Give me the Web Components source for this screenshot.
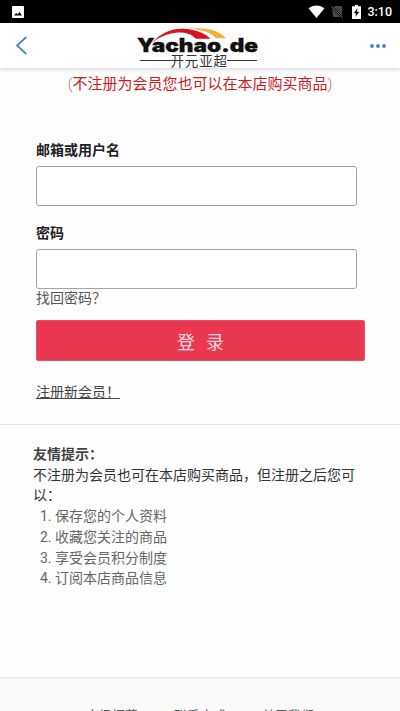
<!DOCTYPE html>
<html lang="zh-CN">
<head>
<meta charset="utf-8">
<meta name="viewport" content="width=device-width, initial-scale=1">
<title>Yachao.de</title>
<style>
    body {
        margin: 0;
        height: 711px;
        overflow: hidden;
        background: #fefefe;
        color: #555;
        font-family: Roboto, "Noto Sans CJK SC", sans-serif;
        font-size: 14px;
    }
</style>
</head>
<body>
<login-page></login-page>

<script>
/**
 * android status bar
 */
class statusBar extends HTMLElement {
    constructor() {
        super();
        this.attachShadow({mode: 'open'});
    }

    connectedCallback() {
        const time = this.getAttribute('time') || '0:00';
        this.shadowRoot.innerHTML = `
            <style>
                :host {
                    display: flex;
                    align-items: center;
                    height: 23px;
                    padding: 0 8px 0 12px;
                    box-sizing: border-box;
                    background: #000;
                    color: #fff;
                }
                svg { display: block; }
                .photo { margin-right: auto; }
                .mobile { margin-left: 6px; }
                .battery { margin-left: 9px; }
                .time {
                    margin-left: 6.500px;
                    font-size: 12.500px;
                    font-weight: 500;
                    line-height: 23px;
                }
            </style>
            <svg class="photo" width="12" height="12" viewBox="0 0 12 12">
                <path fill="#fff" fill-rule="evenodd" d="M1 0h10a1 1 0 0 1 1 1v10a1 1 0 0 1-1 1H1a1 1 0 0 1-1-1V1a1 1 0 0 1 1-1zM2 9.5h8L7.6 6 5.6 8.4 4.2 6.9z"/>
            </svg>
            <svg width="17" height="13" viewBox="0 0 17 13">
                <path fill="#fff" d="M.5 3.300C5-.6 12-.6 16.500 3.300L8.500 13z"/>
            </svg>
            <svg class="mobile" width="12" height="13" viewBox="0 0 12 13">
                <path fill="#484848" d="M4 1h7v11H2L1 3.500z"/>
                <path stroke="#000" stroke-width="2" d="M0 1l12 12"/>
                <path stroke="#777" stroke-width="1" d="M.5 1.500l11 11"/>
            </svg>
            <svg class="battery" width="9" height="14" viewBox="0 0 9 14">
                <path fill="#fff" d="M3 0h3v1.300h3V14H0V1.300h3z"/>
                <path fill="#000" d="M5.600 3L1.800 8.300h2.400L3.300 12l4-5.300H4.700z"/>
            </svg>
            <span class="time">${time}</span>
        `;
    }
}
customElements.define('status-bar', statusBar);

/**
 * shop logo: arcs, name and chinese subtitle
 */
class shopLogo extends HTMLElement {
    constructor() {
        super();
        this.attachShadow({mode: 'open'});
    }

    connectedCallback() {
        this.shadowRoot.innerHTML = `
            <style>
                :host { display: block; }
                svg { display: block; }
                .name {
                    font-family: Inter, sans-serif;
                    font-size: 18.500px;
                    font-weight: 900;
                    fill: #111;
                    stroke: #111;
                    stroke-width: 0.3px;
                }
                .sub {
                    font-family: "Noto Sans CJK SC", sans-serif;
                    font-size: 13.500px;
                    fill: #333;
                }
            </style>
            <svg width="126" height="45" viewBox="0 0 126 45">
                <path fill="#f2b233" d="M54 5.800C70 4 84 6 92 15.300H82C77 9.500 68 6.500 54 5.800z"/>
                <path fill="#d8131f" d="M18 20C27 9.500 38 5.200 50 5.800c11 .5 21 4.300 26.500 10H62C57 10.500 49 8.800 40.500 9.900 32 11 24 14.500 18 20z"/>
                <text class="name" x="3" y="28.800" textLength="121" lengthAdjust="spacingAndGlyphs">Yachao.de</text>
                <path stroke="#333" stroke-width="1.200" d="M6 37.500h31M93 37.500h30"/>
                <text class="sub" x="36.500" y="42.500" textLength="56.500">开元亚超</text>
            </svg>
        `;
    }
}
customElements.define('shop-logo', shopLogo);

/**
 * app header with back and more icons
 */
class appHeader extends HTMLElement {
    constructor() {
        super();
        this.attachShadow({mode: 'open'});
    }

    connectedCallback() {
        this.shadowRoot.innerHTML = `
            <style>
                :host {
                    display: flex;
                    align-items: center;
                    justify-content: space-between;
                    height: 45px;
                    padding: 0 14px 0 15px;
                    box-sizing: border-box;
                    background: #fff;
                    box-shadow: 0 1px 5px rgba(0, 0, 0, 0.18);
                }
                svg { display: block; }
                ::slotted(shop-logo) { margin-right: 5px; }
            </style>
            <svg width="14" height="20" viewBox="0 0 14 20">
                <path fill="none" stroke="#4a7fd0" stroke-width="1.700" d="M11.300 1L2 9.500l9.300 8.500"/>
            </svg>
            <slot></slot>
            <svg width="16" height="4" viewBox="0 0 16 4">
                <g fill="#4a7fd0">
                    <circle cx="2" cy="2" r="1.900"/>
                    <circle cx="8" cy="2" r="1.900"/>
                    <circle cx="14" cy="2" r="1.900"/>
                </g>
            </svg>
        `;
    }
}
customElements.define('app-header', appHeader);

/**
 * labelled text field
 */
class formField extends HTMLElement {
    constructor() {
        super();
        this.attachShadow({mode: 'open'});
    }

    connectedCallback() {
        const label = this.getAttribute('label') || '';
        const type = this.getAttribute('type') || 'text';
        this.shadowRoot.innerHTML = `
            <style>
                :host { display: block; }
                label {
                    display: block;
                    margin-bottom: 6px;
                    color: #222;
                    font-weight: 700;
                    line-height: 20px;
                }
                input {
                    display: block;
                    width: 321px;
                    height: 40px;
                    padding: 0 8px;
                    box-sizing: border-box;
                    border: 1px solid #a4a4a4;
                    border-radius: 3px;
                    background: #fff;
                    font: inherit;
                }
            </style>
            <label for="field">${label}</label>
            <input id="field" type="${type}">
        `;
    }
}
customElements.define('form-field', formField);

/**
 * login form
 */
class loginForm extends HTMLElement {
    constructor() {
        super();
        this.attachShadow({mode: 'open'});
    }

    connectedCallback() {
        this.shadowRoot.innerHTML = `
            <style>
                :host {
                    display: block;
                    height: 284px;
                    padding: 0 36px;
                    border-bottom: 1px solid #e4e4e4;
                }
                form-field + form-field { margin-top: 17px; }
                .forgot {
                    display: block;
                    margin-top: -1px;
                    line-height: 20px;
                }
                button {
                    display: block;
                    width: 329px;
                    height: 41px;
                    margin: 12px 0 21px;
                    padding: 0;
                    border: 1px solid #ec5064;
                    border-radius: 2px;
                    background: #e9384f;
                    color: #fbd5da;
                    font-family: inherit;
                    font-size: 18px;
                    word-spacing: 6.500px;
                }
                .register {
                    color: #444;
                    line-height: 20px;
                    text-decoration: underline;
                }
            </style>
            <form-field label="邮箱或用户名"></form-field>
            <form-field label="密码" type="password"></form-field>
            <a class="forgot">找回密码？</a>
            <button type="button">登 录</button>
            <a class="register">注册新会员！</a>
        `;
    }
}
customElements.define('login-form', loginForm);

/**
 * friendly hints, list items come from the slot
 */
class hintBox extends HTMLElement {
    constructor() {
        super();
        this.attachShadow({mode: 'open'});
    }

    connectedCallback() {
        const title = this.getAttribute('title-text') || '';
        const text = this.getAttribute('text') || '';
        this.shadowRoot.innerHTML = `
            <style>
                :host {
                    display: block;
                    height: 233px;
                    padding: 19px 33px 0;
                    line-height: 20.700px;
                }
                h3 {
                    margin: 0;
                    color: #444;
                    font-size: 14px;
                    font-weight: 700;
                }
                p {
                    margin: 0;
                    color: #333;
                }
                ol {
                    margin: 0;
                    padding-left: 22px;
                    color: #666;
                }
            </style>
            <h3>${title}</h3>
            <p>${text}</p>
            <ol><slot></slot></ol>
        `;
    }
}
customElements.define('hint-box', hintBox);

/**
 * footer links
 */
class pageFooter extends HTMLElement {
    constructor() {
        super();
        this.attachShadow({mode: 'open'});
    }

    connectedCallback() {
        this.shadowRoot.innerHTML = `
            <style>
                :host {
                    display: flex;
                    justify-content: center;
                    gap: 36px;
                    height: 32px;
                    padding-top: 27px;
                    border-top: 2px solid #eee;
                    background: #fafafa;
                    font-size: 13px;
                    line-height: 20px;
                }
            </style>
            <slot></slot>
        `;
    }
}
customElements.define('page-footer', pageFooter);

/**
 * whole page
 */
class loginPage extends HTMLElement {
    constructor() {
        super();
        this.attachShadow({mode: 'open'});
    }

    connectedCallback() {
        this.shadowRoot.innerHTML = `
            <style>
                :host { display: block; }
                .notice {
                    margin: 0 0 45px;
                    padding-top: 5px;
                    color: #c81c1c;
                    font-size: 15px;
                    line-height: 22px;
                    text-align: center;
                }
                .notice span { font-weight: 300; opacity: 0.7; }
            </style>
            <status-bar time="3:10"></status-bar>
            <app-header><shop-logo></shop-logo></app-header>
            <p class="notice"><span>(</span>不注册为会员您也可以在本店购买商品<span>)</span></p>
            <login-form></login-form>
            <hint-box title-text="友情提示：" text="不注册为会员也可在本店购买商品，但注册之后您可以：">
                <li>保存您的个人资料</li>
                <li>收藏您关注的商品</li>
                <li>享受会员积分制度</li>
                <li>订阅本店商品信息</li>
            </hint-box>
            <page-footer>
                <a>市场招募</a>
                <a>联系方式</a>
                <a>关于我们</a>
            </page-footer>
        `;
    }
}
customElements.define('login-page', loginPage);
</script>
</body>
</html>
